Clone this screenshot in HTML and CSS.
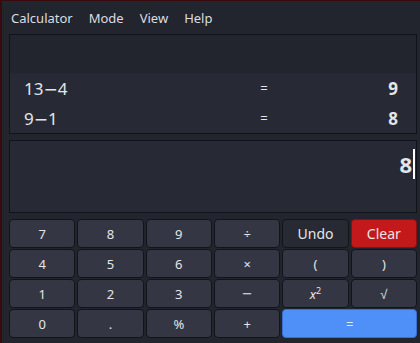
FILE: index.html
```html
<!DOCTYPE html>
<html lang="en">
<head>
    <meta charset="UTF-8">
    <meta name="viewport" content="width=device-width, initial-scale=1.0">
    <title>Calculator</title>
    <link rel="stylesheet" href="styles.css">
</head>
<body>

    <div class="window">
        <div class="menubar">
            <span>Calculator</span>
            <span>Mode</span>
            <span>View</span>
            <span>Help</span>
        </div>

        <div class="history">
            <div class="history-head"></div>
            <div class="history-row">
                <span class="expr">13<span class="minus">−</span>4</span>
                <span class="eq">=</span>
                <span class="res">9</span>
            </div>
            <div class="history-row">
                <span class="expr">9<span class="minus">−</span>1</span>
                <span class="eq">=</span>
                <span class="res">8</span>
            </div>
        </div>

        <div class="entry">
            <span class="entry-value">8</span><span class="cursor"></span>
        </div>

        <div class="keys">
            <button>7</button>
            <button>8</button>
            <button>9</button>
            <button>÷</button>
            <button class="undo">Undo</button>
            <button class="clear">Clear</button>

            <button>4</button>
            <button>5</button>
            <button>6</button>
            <button>×</button>
            <button>(</button>
            <button>)</button>

            <button>1</button>
            <button>2</button>
            <button>3</button>
            <button class="minus">−</button>
            <button class="pow"><i>x</i><sup>2</sup></button>
            <button>√</button>

            <button>0</button>
            <button>.</button>
            <button>%</button>
            <button>+</button>
            <button class="equals">=</button>
        </div>
    </div>

</body>
</html>
```

FILE: styles.css
```css
body {
    margin: 0;
    background-color: #22252e;
    font-family: "Noto Sans", sans-serif;
    color: #e4e5e8;
}
.window {
    box-sizing: border-box;
    width: 420px;
    height: 343px;
    border-left: 2px solid #3a0b0d;
    border-top: 1px solid #3a0b0d;
    padding: 0 3px 0 7px;
    overflow: hidden;
}
.menubar {
    display: flex;
    gap: 16px;
    height: 33px;
    align-items: center;
    padding-left: 2px;
    font-size: 13px;
    color: #dcdde0;
}
.history {
    border: 1px solid #111318;
    background: #272a35;
}
.history-head {
    height: 38px;
    background: #22252e;
}
.history-row {
    display: grid;
    grid-template-columns: 1fr 24px 122px;
    align-items: center;
    height: 30px;
    padding: 0 18px 0 14px;
    font-size: 17px;
}
.minus {
    font-family: "DejaVu Sans", sans-serif;
}
.eq {
    text-align: center;
    font-size: 13px;
}
.res {
    text-align: right;
    font-weight: bold;
}
.entry {
    margin-top: 6px;
    height: 73px;
    border: 1px solid #111318;
    background: #272a35;
    display: flex;
    justify-content: flex-end;
    align-items: flex-start;
    padding: 8px 1px 0 0;
    box-sizing: border-box;
}
.entry-value {
    font-size: 22px;
    font-weight: bold;
    line-height: 30px;
}
.cursor {
    width: 2px;
    height: 30px;
    background: #ffffff;
    margin-left: 1px;
}
.keys {
    margin-top: 6px;
    display: grid;
    grid-template-columns: repeat(6, 1fr);
    grid-auto-rows: 29px;
    gap: 1px 2px;
}
.keys button {
    font-family: "Noto Sans", sans-serif;
    font-size: 13px;
    color: #e4e5e8;
    background: #343743;
    border: 1px solid #121419;
    border-radius: 4px;
    padding: 0;
}
.keys .minus {
    font-family: "DejaVu Sans", sans-serif;
}
.keys .undo {
    background: #282a33;
    font-size: 14px;
}
.keys .clear {
    background: #c4191a;
    border-color: #8a1010;
    font-size: 14px;
}
.keys .equals {
    grid-column: span 2;
    background: #4f8ff8;
    border-color: #3a6fd0;
}
.pow i {
    font-style: italic;
}
.pow sup {
    font-size: 9px;
}
```
